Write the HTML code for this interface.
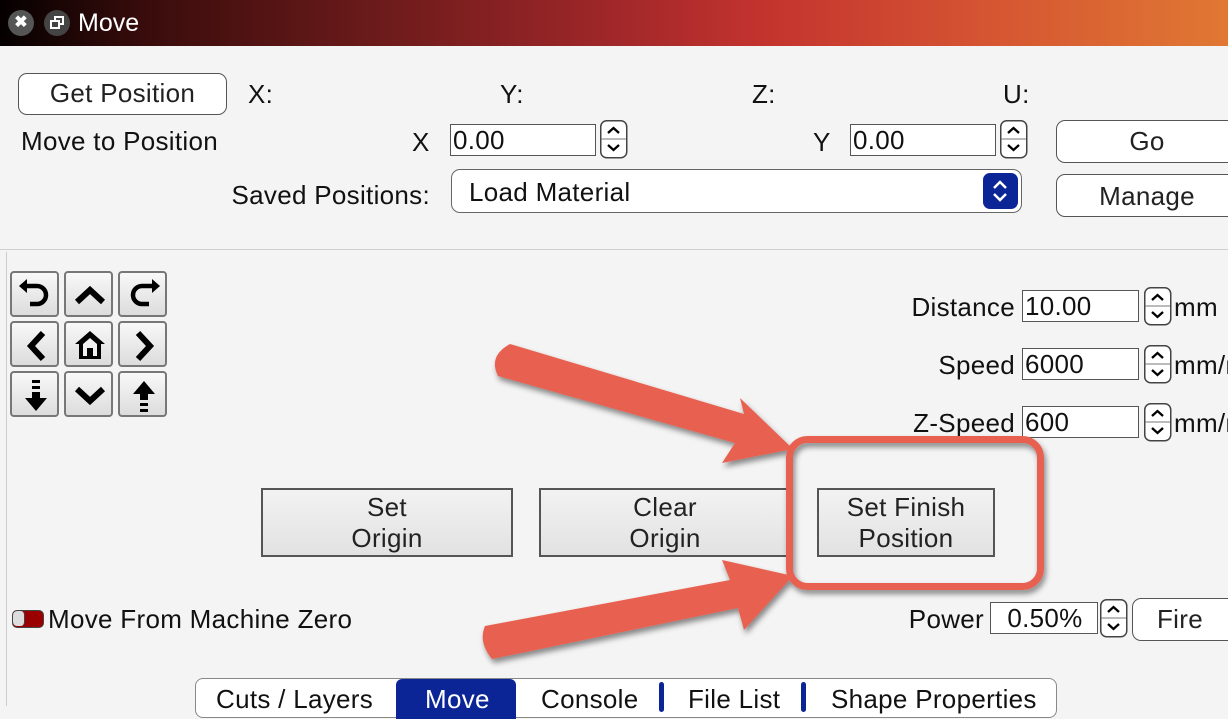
<!DOCTYPE html>
<html><head><meta charset="utf-8"><style>
*{margin:0;padding:0;box-sizing:border-box}
body{width:1228px;height:706px;overflow:hidden;background:#f4f4f4;font-family:"Liberation Sans",sans-serif;color:#111;position:relative}
.a{position:absolute;white-space:nowrap}
.t{font-size:26px;line-height:28px;letter-spacing:0.3px}
.r{text-align:right}
.btn{position:absolute;border:1.5px solid #555;border-radius:9px;background:#fff;font-size:26px;letter-spacing:0.3px;text-align:center;color:#222}
.inp{position:absolute;border:1.5px solid #555;background:#fff;font-size:26px;letter-spacing:0.3px;line-height:30px;padding-left:2px}
.sq{position:absolute;border:2px solid #555;background:linear-gradient(#f2f2f2,#e2e2e2);font-size:26px;letter-spacing:0.3px;line-height:31px;text-align:center;color:#222}
.nb{position:absolute;width:49px;height:46px;border:2px solid #777;border-radius:4px;background:linear-gradient(#f8f8f8,#dcdcdc)}
.nb svg{position:absolute;left:0;top:0}
</style></head><body>
<div class="a" style="left:0;top:0;width:1228px;height:46px;background:linear-gradient(90deg,#050000 0%,#3a0c0c 12%,#6a1a1a 30%,#a0272a 50%,#c3332e 62%,#d55432 80%,#e07833 100%)"></div>
<div class="a" style="left:8px;top:10px;width:26px;height:26px;border-radius:13px;background:#555;color:#fff;font-size:16px;line-height:26px;text-align:center;font-weight:bold">✖</div>
<div class="a" style="left:44px;top:10px;width:26px;height:26px;border-radius:13px;background:#444"><div style="position:absolute;left:10px;top:6px;width:10px;height:9px;border:2px solid #fff"></div><div style="position:absolute;left:6px;top:10px;width:10px;height:9px;border:2px solid #fff;background:#444"></div></div>
<div class="a" style="left:78px;top:9px;color:#fff;font-size:25px;line-height:28px">Move</div>

<div class="btn" style="left:18px;top:73px;width:209px;height:42px;line-height:39px">Get Position</div>
<div class="a t" style="left:248px;top:80px">X:</div>
<div class="a t" style="left:500px;top:80px">Y:</div>
<div class="a t" style="left:752px;top:80px">Z:</div>
<div class="a t" style="left:1003px;top:80px">U:</div>

<div class="a t" style="left:21px;top:127px">Move to Position</div>
<div class="a t" style="left:412px;top:128px">X</div>
<div class="inp" style="left:450px;top:124px;width:146px;height:32px">0.00</div>
<div class="a t" style="left:813px;top:128px">Y</div>
<div class="inp" style="left:850px;top:124px;width:146px;height:32px">0.00</div>

<div class="a t r" style="right:798px;top:181px">Saved Positions:</div>
<div class="a" style="left:451px;top:169px;width:571px;height:44px;border:1.5px solid #666;border-radius:9px;background:#fff"></div>
<div class="a t" style="left:469px;top:178px">Load Material</div>
<div class="a" style="left:983px;top:173px;width:35px;height:36px;border-radius:7px;background:#0c2596"><svg width="35" height="36"><path d="M11 15l6-6 6 6M11 21l6 6 6-6" stroke="#fff" stroke-width="2.5" fill="none"/></svg></div>

<div class="btn" style="left:1056px;top:120px;width:190px;height:43px;line-height:40px;padding-right:8px">Go</div>
<div class="btn" style="left:1056px;top:174px;width:190px;height:43px;line-height:42px;padding-right:8px">Manage</div>

<div class="a" style="left:0;top:249px;width:1228px;height:1px;background:#cfcfcf"></div>
<div class="a" style="left:6px;top:252px;width:1px;height:454px;background:#ccc"></div>

<!-- nav grid -->
<div class="nb" style="left:10px;top:271px"><svg width="49" height="46"><path d="M13 13h12a9 9 0 0 1 0 18h-7" stroke="#000" stroke-width="4.5" fill="none"/><path d="M7 13l8-7v14z" fill="#000"/></svg></div>
<div class="nb" style="left:64px;top:271px"><svg width="49" height="46"><path d="M11 29l13-12 13 12" stroke="#000" stroke-width="6" fill="none"/></svg></div>
<div class="nb" style="left:118px;top:271px"><svg width="49" height="46"><path d="M34 13h-12a9 9 0 0 0 0 18h7" stroke="#000" stroke-width="4.5" fill="none"/><path d="M40 13l-8-7v14z" fill="#000"/></svg></div>
<div class="nb" style="left:10px;top:321px"><svg width="49" height="46"><path d="M31 10l-12 13 12 13" stroke="#000" stroke-width="6" fill="none"/></svg></div>
<div class="nb" style="left:64px;top:321px"><svg width="49" height="46"><path d="M24 8l-15 13h4v15h22v-15h4z" fill="#000"/><path d="M17 21l7-6 7 6v12h-4v-8h-6v8h-4z" fill="#f0f0f0"/></svg></div>
<div class="nb" style="left:118px;top:321px"><svg width="49" height="46"><path d="M18 10l12 13-12 13" stroke="#000" stroke-width="6" fill="none"/></svg></div>
<div class="nb" style="left:10px;top:371px"><svg width="49" height="46"><rect x="20" y="7" width="8" height="3" fill="#000"/><rect x="20" y="13" width="8" height="3" fill="#000"/><rect x="20" y="19" width="8" height="6" fill="#000"/><path d="M13 25h22l-11 13z" fill="#000"/></svg></div>
<div class="nb" style="left:64px;top:371px"><svg width="49" height="46"><path d="M11 16l13 12 13-12" stroke="#000" stroke-width="6" fill="none"/></svg></div>
<div class="nb" style="left:118px;top:371px"><svg width="49" height="46"><path d="M13 21h22l-11-13z" fill="#000"/><rect x="20" y="21" width="8" height="6" fill="#000"/><rect x="20" y="30" width="8" height="3" fill="#000"/><rect x="20" y="36" width="8" height="3" fill="#000"/></svg></div>

<div class="a t r" style="right:213px;top:293px">Distance</div>
<div class="inp" style="left:1022px;top:290px;width:117px;height:32px">10.00</div>
<div class="a t" style="left:1174px;top:293px">mm</div>
<div class="a t r" style="right:213px;top:351px">Speed</div>
<div class="inp" style="left:1022px;top:348px;width:117px;height:32px">6000</div>
<div class="a t" style="left:1174px;top:351px">mm/m</div>
<div class="a t r" style="right:213px;top:409px">Z-Speed</div>
<div class="inp" style="left:1022px;top:406px;width:117px;height:32px">600</div>
<div class="a t" style="left:1174px;top:409px">mm/m</div>

<div class="sq" style="left:261px;top:488px;width:252px;height:69px;padding-top:2px">Set<br>Origin</div>
<div class="sq" style="left:539px;top:488px;width:252px;height:69px;padding-top:2px">Clear<br>Origin</div>
<div class="sq" style="left:817px;top:488px;width:178px;height:69px;padding-top:2px">Set Finish<br>Position</div>

<div class="a" style="left:12px;top:610px;width:32px;height:18px;border:1.5px solid #444;border-radius:5px;background:#9a0000;overflow:hidden"><div style="width:12px;height:15px;border-radius:4px;background:#ddd;border-right:1px solid #444"></div></div>
<div class="a t" style="left:48px;top:605px">Move From Machine Zero</div>
<div class="a t r" style="right:244px;top:605px">Power</div>
<div class="inp" style="left:990px;top:602px;width:108px;height:32px;text-align:center">0.50%</div>
<div class="btn" style="left:1132px;top:598px;width:110px;height:43px;line-height:40px;padding-right:14px">Fire</div>

<svg class="a" style="left:0;top:0" width="1228" height="706">
<defs><g id="sp"><rect x="0.75" y="0.75" width="26" height="37" rx="6" fill="#fff" stroke="#444" stroke-width="1.5"/><line x1="1" y1="19" x2="26" y2="19" stroke="#777"/><path d="M8 13l5.5-5 5.5 5M8 25l5.5 5 5.5-5" stroke="#000" stroke-width="2.3" fill="none"/></g></defs>
<use href="#sp" x="600" y="120"/><use href="#sp" x="1000" y="120"/>
<use href="#sp" x="1144" y="287"/><use href="#sp" x="1144" y="345"/><use href="#sp" x="1144" y="403"/>
<use href="#sp" x="1100" y="599"/>
</svg>

<div class="a" style="left:195px;top:678px;width:862px;height:40px;border:1.5px solid #888;border-radius:8px;background:#fff"></div>
<div class="a" style="left:396px;top:679px;width:120px;height:40px;background:#0c2596;border-radius:6px 6px 0 0"></div>
<div class="a" style="left:659px;top:682px;width:5px;height:30px;background:#0c2596;border-radius:3px"></div>
<div class="a" style="left:801px;top:682px;width:5px;height:30px;background:#0c2596;border-radius:3px"></div>
<div class="a t" style="left:216px;top:685px">Cuts / Layers</div>
<div class="a t" style="left:425px;top:685px;color:#fff">Move</div>
<div class="a t" style="left:541px;top:685px">Console</div>
<div class="a t" style="left:688px;top:685px">File List</div>
<div class="a t" style="left:831px;top:685px">Shape Properties</div>

<svg class="a" style="left:0;top:0" width="1228" height="706">
<defs><filter id="sh" x="-10%" y="-10%" width="130%" height="130%"><feDropShadow dx="2" dy="4" stdDeviation="3" flood-color="#000" flood-opacity="0.45"/></filter></defs>
<g filter="url(#sh)" fill="#e8604f">
<path d="M510 344 L744 414 L740 398 L793 449 L722 463 L735 443 L498 376 Q488 356 510 344Z"/>
<path d="M485 626 L730 580 L722 560 L793 576 L744 630 L738 608 L492 659 Q478 642 485 626Z"/>
<rect x="789.5" y="439.5" width="251" height="147" rx="18" fill="none" stroke="#e8604f" stroke-width="7"/>
</g>
</svg>
</body></html>
